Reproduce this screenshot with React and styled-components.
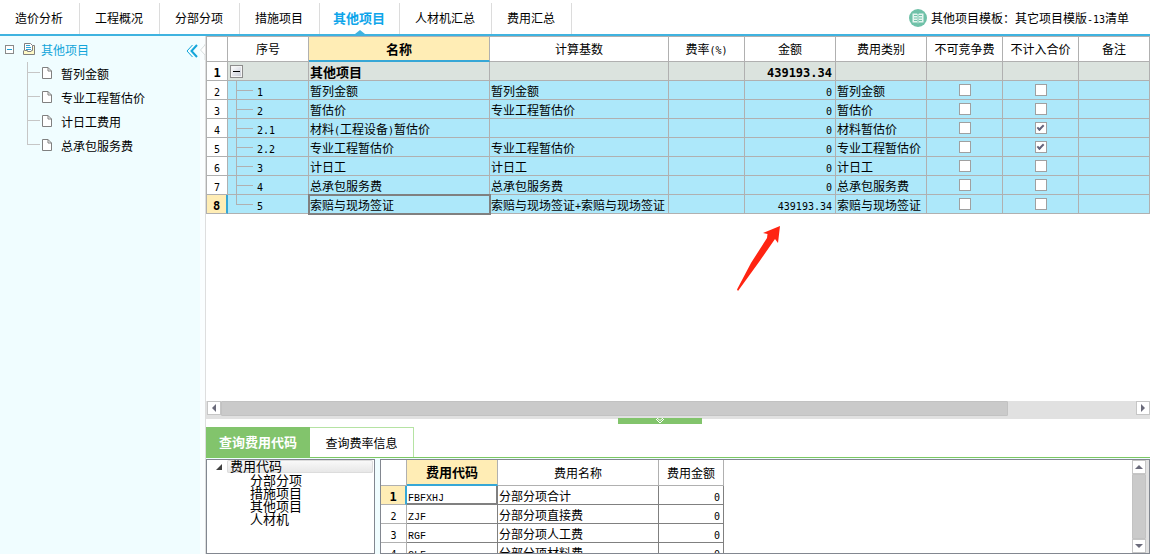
import React, { useState } from "react";
import styled, { createGlobalStyle } from "styled-components";

const GlobalStyle = createGlobalStyle`
  * {
    box-sizing: border-box;
  }
  body {
    margin: 0;
    overflow: hidden;
    color: #000;
    background: #fff;
    font-family: "Noto Sans CJK SC", sans-serif;
    font-size: 12px;
    line-height: 16px;
  }
  button {
    margin: 0;
    padding: 0;
    border: 0;
    background: none;
    color: inherit;
    font: inherit;
    cursor: pointer;
  }
  ul {
    margin: 0;
    padding: 0;
    list-style: none;
  }
`;

const Page = styled.div`
  display: flex;
  flex-direction: column;
  height: 100vh;
`;

/* top navigation */
const TopBar = styled.header`
  display: flex;
  align-items: flex-end;
  justify-content: space-between;
  height: 36px;
  padding-top: 3px;
  border-bottom: 2px solid #3fb3e0;
`;
const TopTabs = styled.nav`
  display: flex;
  height: 100%;
`;
const TopTab = styled.button`
  position: relative;
  padding: 0 16px 2px 15px;
  border-right: 1px solid #dcdcdc;
  white-space: nowrap;
  color: ${(props) => (props.$active ? "#0ea5ea" : "#000")};
  font-size: ${(props) => (props.$active ? "13px" : "12px")};
  font-weight: ${(props) => (props.$active ? "bold" : "normal")};
  span {
    margin: 0 ${(props) => (props.$active ? "-2px" : "0")};
  }
`;
const TabPointer = styled.i`
  position: absolute;
  left: 50%;
  bottom: 0;
  margin-left: -5px;
  border: 5px solid transparent;
  border-top: 0;
  border-bottom: 4px solid #3fb3e0;
`;
const TemplateButton = styled.button`
  display: flex;
  align-items: center;
  gap: 4px;
  height: 30px;
  margin-right: 21px;
  align-self: flex-start;
  white-space: nowrap;
`;

/* left tree */
const Body = styled.div`
  display: flex;
  flex: 1;
  min-height: 0;
`;
const Sidebar = styled.aside`
  width: 200px;
  flex-shrink: 0;
  background: #f0fdff;
`;
const SideHead = styled.div`
  display: flex;
  align-items: center;
  height: 26px;
  padding: 0 2px 0 5px;
  color: #12a5da;
`;
const SideTitle = styled.span`
  flex: 1;
  padding: 2px 0 0 6px;
`;
const SideToggle = styled.button`
  display: flex;
  padding-top: 3px;
`;
const SideList = styled.ul`
  padding-left: 27px;
`;
const SideItem = styled.li`
  display: flex;
  align-items: center;
  height: 24px;
  background: linear-gradient(#c6c6c6, #c6c6c6) 0 0 / 1px
      ${(props) => (props.$last ? "11px" : "24px")} no-repeat,
    linear-gradient(#c6c6c6, #c6c6c6) 0 10px / 13px 1px no-repeat;
  padding-left: 15px;
  svg {
    margin-bottom: 3px;
  }
`;
const SideLink = styled.a`
  padding-left: 9px;
  color: #000;
  text-decoration: none;
`;
const Gutter = styled.div`
  display: flex;
  width: 6px;
  flex-shrink: 0;
  padding-top: 8px;
  border-right: 1px solid #dedede;
  background: #fafeff;
`;

const Main = styled.main`
  position: relative;
  display: flex;
  flex: 1;
  flex-direction: column;
  min-width: 0;
`;
const GridArea = styled.div`
  flex: 1;
  min-height: 0;
  overflow: hidden;
`;

/* tables */
const Mono = styled.span`
  font-family: "DejaVu Sans Mono", monospace;
  font-size: ${(props) => (props.$bold ? "12px" : "10px")};
  line-height: 10px;
`;
const Code = styled.span`
  font-family: "Liberation Mono", monospace;
  font-size: 10px;
  line-height: 10px;
`;
const Grid = styled.table`
  width: ${(props) => props.$width || "100%"};
  table-layout: fixed;
  border-collapse: separate;
  border-spacing: 0;
`;
const Th = styled.th`
  height: 26px;
  padding: 0;
  border: solid #b0b0b0;
  border-width: ${(props) => (props.$top ? "1px" : "0")} 1px 1px
    ${(props) => (props.$first ? "1px" : "0")};
  font-size: ${(props) => (props.$current ? "13px" : "12px")};
  font-weight: ${(props) => (props.$current ? "bold" : "normal")};
  background: ${(props) => (props.$current ? "#ffedb5" : "#fff")};
  ${(props) => props.$current && "border-bottom: 2px solid #36a7d6;"}
`;
const RowHead = styled.th`
  height: 19px;
  padding: 1px 0 0;
  border: solid #b0b0b0;
  border-width: 0 1px 1px ${(props) => (props.$first ? "1px" : "0")};
  line-height: 16px;
  font-weight: ${(props) => (props.$bold ? "bold" : "normal")};
  background: ${(props) => (props.$current ? "#ffedb5" : "#fff")};
  ${(props) => props.$current && "border-right: 2px solid #36a7d6;"}
`;
const Td = styled.td`
  height: 19px;
  padding: 1px 3px 0 1px;
  border: solid ${(props) => props.$line || "#b0b0b0"};
  border-width: 0 1px 1px 0;
  line-height: 16px;
  white-space: nowrap;
  text-align: ${(props) => props.$align || "left"};
  background: ${(props) => props.$bg || "#ade8fa"};
  font-size: ${(props) => (props.$bold ? "13px" : "12px")};
  font-weight: ${(props) => (props.$bold ? "bold" : "normal")};
  ${(props) =>
    props.$selected && "outline: 2px solid #808080; outline-offset: -1px;"}
  ${(props) =>
    props.$focused && "box-shadow: inset -1px -1px 0 #808080;"}
`;
const TreeTd = styled(Td)`
  padding-left: 29px;
  background: linear-gradient(#b0b0b0, #b0b0b0) 8px 0 / 1px
      ${(props) => (props.$last ? "10px" : "19px")} no-repeat,
    linear-gradient(#b0b0b0, #b0b0b0) 8px 9px / 17px 1px no-repeat, #ade8fa;
`;
const ExpandTd = styled(Td)`
  padding: 0 2px;
`;
const CheckTd = styled(Td)`
  padding: 0;
`;
const Expander = styled.button`
  display: block;
  width: 13px;
  height: 13px;
  border: 1px solid #8c8c8c;
  outline: 1px solid #f4f4f4;
  outline-offset: -2px;
  background: linear-gradient(#000, #000) 50% 50% / 7px 1px no-repeat,
    linear-gradient(135deg, #fff, #c4c8d4);
`;
const Check = styled.input`
  display: block;
  appearance: none;
  width: 12px;
  height: 12px;
  margin: 0 auto;
  border: 1px solid #a0a0a0;
  background: #fff;
  &:checked::after {
    content: "";
    display: block;
    width: 5px;
    height: 2px;
    margin: 2px 0 0 1px;
    border: solid #63637b;
    border-width: 0 0 2px 2px;
    transform: rotate(-45deg);
  }
`;

/* scroll bars */
const HScroll = styled.div`
  display: flex;
  height: 18px;
  padding: 0 0 3px 1px;
  background: #e1e1e1;
`;
const VScroll = styled.div`
  display: flex;
  flex-direction: column;
  width: 17px;
  padding-right: 3px;
  background: #e1e1e1;
`;
const ScrollButton = styled.button`
  display: flex;
  flex-shrink: 0;
  align-items: center;
  justify-content: center;
  width: 14px;
  height: 14px;
  border: 1px solid #c6c6c6;
  background: #fff;
`;
const Track = styled.div`
  display: flex;
  flex: 1;
`;
const Thumb = styled.div`
  flex: 0 0 ${(props) => props.$size};
  border: 1px solid #c2c2c2;
  border-radius: 1px;
  background: #cacaca;
`;

/* bottom panel */
const Splitter = styled.div`
  height: 8px;
`;
const SplitHandle = styled.button`
  display: flex;
  align-items: center;
  justify-content: center;
  width: 84px;
  height: 6px;
  margin: -1px 0 0 412px;
  background: #82c46c;
`;
const QueryTabs = styled.div`
  display: flex;
  height: 31px;
  border-bottom: 1px solid #7cc862;
`;
const QueryTab = styled.button`
  width: 104px;
  border: solid #b5e3a3;
  border-width: ${(props) => (props.$active ? "0" : "1px 1px 0 0")};
  font-size: ${(props) => (props.$active ? "13px" : "12px")};
  font-weight: ${(props) => (props.$active ? "bold" : "normal")};
  color: ${(props) => (props.$active ? "#fff" : "#000")};
  background: ${(props) => (props.$active ? "#82c46c" : "#fff")};
`;
const Detail = styled.section`
  display: flex;
  gap: 5px;
  height: 96px;
  padding-top: 1px;
  background: #f0fdff;
`;
const CodeTree = styled.ul`
  width: 169px;
  flex-shrink: 0;
  border: 1px solid #828790;
  background: #fff;
  font-size: 13px;
  line-height: 13px;
`;
const CodeRoot = styled.div`
  display: flex;
  align-items: center;
  gap: 5px;
  padding-left: 9px;
  span {
    flex: 1;
    height: 13px;
    margin-right: 1px;
    padding-left: 3px;
    border-radius: 2px;
    box-shadow: inset 0 0 0 1px #dcdcdc;
    background: linear-gradient(#fafafa, #e6e6e6);
    line-height: 12px;
  }
`;
const CodeItem = styled.li`
  padding-left: 43px;
`;
const CodeGrid = styled.div`
  display: flex;
  flex: 1;
  min-width: 0;
  overflow: hidden;
  border: 1px solid #828790;
  background: #fff;
`;
const CodeScroll = styled.div`
  flex: 1;
  overflow: hidden;
`;

const ArrowMark = styled.svg`
  position: absolute;
  top: 189px;
  left: 530px;
  pointer-events: none;
`;

const TABS = ["造价分析", "工程概况", "分部分项", "措施项目", "其他项目", "人材机汇总", "费用汇总"];
const SIDE_ITEMS = ["暂列金额", "专业工程暂估价", "计日工费用", "总承包服务费"];
const CODE_ITEMS = ["分部分项", "措施项目", "其他项目", "人材机"];
const GREY = "#dbe3de";

const ROWS = [
  { no: "1", name: "暂列金额", base: "暂列金额", amount: "0", type: "暂列金额" },
  { no: "2", name: "暂估价", base: "专业工程暂估价", amount: "0", type: "暂估价" },
  {
    no: "2.1",
    name: (
      <>
        材料<Mono>(</Mono>工程设备<Mono>)</Mono>暂估价
      </>
    ),
    amount: "0",
    type: "材料暂估价",
    excluded: true,
  },
  { no: "2.2", name: "专业工程暂估价", base: "专业工程暂估价", amount: "0", type: "专业工程暂估价", excluded: true },
  { no: "3", name: "计日工", base: "计日工", amount: "0", type: "计日工" },
  { no: "4", name: "总承包服务费", base: "总承包服务费", amount: "0", type: "总承包服务费" },
  {
    no: "5",
    name: "索赔与现场签证",
    base: (
      <>
        索赔与现场签证<Mono>+</Mono>索赔与现场签证
      </>
    ),
    amount: "439193.34",
    type: "索赔与现场签证",
  },
];

const CODES = [
  { code: "FBFXHJ", name: "分部分项合计" },
  { code: "ZJF", name: "分部分项直接费" },
  { code: "RGF", name: "分部分项人工费" },
  { code: "CLF", name: "分部分项材料费" },
];

function BookIcon() {
  return (
    <svg width="18" height="18" viewBox="0 0 18 18">
      <circle cx="9" cy="9" r="9" fill="#6fc1a8" />
      <path d="M3.5 4.5H8L9 5.5L10 4.5H14.5V13.5H10L9 14.5L8 13.5H3.5Z" fill="#e4f5ef" />
      <path d="M9 5.5V14M5 6.5H8M5 9H8M5 11.5H8M10 6.5H13M10 9H13M10 11.5H13" stroke="#6fc1a8" fill="none" />
    </svg>
  );
}

function ProjectIcon() {
  return (
    <svg width="12" height="12" viewBox="0 0 12 12">
      <path d="M0.5 7.500V11.5H11.5V2.500H9.500" fill="#fffbd0" stroke="#808080" />
      <path d="M1.5 7.5V0.5H7.5L9.5 2.5V7.5H8.500V8.500H4.500V7.500Z" fill="#fff" stroke="#808080" />
      <path d="M3 2.5H7M3 4.5H8M3 6.5H8" stroke="#2ea5d6" fill="none" />
      <path d="M1 8H4V9.500H8.500V8H11V11H1Z" fill="#fff9c4" />
    </svg>
  );
}

function FileIcon() {
  return (
    <svg width="10" height="12" viewBox="0 0 10 12">
      <path d="M0.5 0.5H6L9.5 4V11.5H0.5Z" fill="#fff" stroke="#808080" />
      <path d="M6 0.5V4H9.5" fill="none" stroke="#808080" />
    </svg>
  );
}

function MinusBox() {
  return (
    <svg width="9" height="9" viewBox="0 0 9 9">
      <rect x="0.5" y="0.5" width="8" height="8" fill="#fff" stroke="#8a8a8a" />
      <path d="M2 4.5H7" stroke="#1aa0d8" />
    </svg>
  );
}

function Triangle({ dir }) {
  const shapes = {
    left: "M6 0V8L2 4Z",
    right: "M2 0V8L6 4Z",
    up: "M0 6H8L4 2Z",
    down: "M0 2H8L4 6Z",
  };
  return (
    <svg width="8" height="8" viewBox="0 0 8 8">
      <path d={shapes[dir]} fill="#6b6b7b" />
    </svg>
  );
}

function CostTable() {
  return (
    <Grid>
      <colgroup>
        <col style={{ width: 22 }} />
        <col style={{ width: 81 }} />
        <col style={{ width: 181 }} />
        <col style={{ width: 179 }} />
        <col style={{ width: 76 }} />
        <col style={{ width: 91 }} />
        <col style={{ width: 91 }} />
        <col style={{ width: 76 }} />
        <col style={{ width: 76 }} />
        <col />
      </colgroup>
      <thead>
        <tr>
          <Th $top $first />
          <Th $top>序号</Th>
          <Th $top $current>名称</Th>
          <Th $top>计算基数</Th>
          <Th $top>
            费率<Mono>(%)</Mono>
          </Th>
          <Th $top>金额</Th>
          <Th $top>费用类别</Th>
          <Th $top>不可竞争费</Th>
          <Th $top>不计入合价</Th>
          <Th $top>备注</Th>
        </tr>
      </thead>
      <tbody>
        <tr>
          <RowHead $first $bold>
            <Mono $bold>1</Mono>
          </RowHead>
          <ExpandTd $bg={GREY}>
            <Expander aria-label="折叠" />
          </ExpandTd>
          <Td $bg={GREY} $bold>其他项目</Td>
          <Td $bg={GREY} />
          <Td $bg={GREY} />
          <Td $bg={GREY} $bold $align="right">
            <Mono $bold>439193.34</Mono>
          </Td>
          <Td $bg={GREY} />
          <Td $bg={GREY} />
          <Td $bg={GREY} />
          <Td $bg={GREY} />
        </tr>
        {ROWS.map((row, i) => {
          const last = i === ROWS.length - 1;
          return (
            <tr key={row.no}>
              <RowHead $first $current={last} $bold={last}>
                <Mono $bold={last}>{i + 2}</Mono>
              </RowHead>
              <TreeTd $last={last}>
                <Mono>{row.no}</Mono>
              </TreeTd>
              <Td $selected={last}>{row.name}</Td>
              <Td>{row.base}</Td>
              <Td />
              <Td $align="right">
                <Mono>{row.amount}</Mono>
              </Td>
              <Td>{row.type}</Td>
              <CheckTd>
                <Check type="checkbox" aria-label="不可竞争费" />
              </CheckTd>
              <CheckTd>
                <Check type="checkbox" aria-label="不计入合价" defaultChecked={row.excluded} />
              </CheckTd>
              <Td />
            </tr>
          );
        })}
      </tbody>
    </Grid>
  );
}

function CodeTable() {
  return (
    <Grid $width="343px">
      <colgroup>
        <col style={{ width: 26 }} />
        <col style={{ width: 91 }} />
        <col style={{ width: 161 }} />
        <col style={{ width: 65 }} />
      </colgroup>
      <thead>
        <tr>
          <Th />
          <Th $current>费用代码</Th>
          <Th>费用名称</Th>
          <Th>费用金额</Th>
        </tr>
      </thead>
      <tbody>
        {CODES.map((row, i) => (
          <tr key={row.code}>
            <RowHead $current={i === 0} $bold={i === 0}>
              <Mono $bold={i === 0}>{i + 1}</Mono>
            </RowHead>
            <Td $bg="#fff" $line="#808080" $focused={i === 0}>
              <Code>{row.code}</Code>
            </Td>
            <Td $bg="#fff" $line="#808080">{row.name}</Td>
            <Td $bg="#fff" $line="#808080" $align="right">
              <Mono>0</Mono>
            </Td>
          </tr>
        ))}
      </tbody>
    </Grid>
  );
}

function App() {
  const [tab, setTab] = useState("其他项目");
  const [query, setQuery] = useState("查询费用代码");

  return (
    <Page>
      <GlobalStyle />
      <TopBar>
        <TopTabs>
          {TABS.map((name) => (
            <TopTab key={name} $active={name === tab} onClick={() => setTab(name)}>
              <span>{name}</span>
              {name === tab && <TabPointer />}
            </TopTab>
          ))}
        </TopTabs>
        <TemplateButton>
          <BookIcon />
          <span>
            其他项目模板：其它项目模版<Mono>-13</Mono>清单
          </span>
        </TemplateButton>
      </TopBar>
      <Body>
        <Sidebar>
          <SideHead>
            <MinusBox />
            <svg width="9" height="1" />
            <ProjectIcon />
            <SideTitle>其他项目</SideTitle>
            <SideToggle aria-label="收起">
              <svg width="12" height="14" viewBox="0 0 12 14" fill="none" stroke="#12a5da">
                <path d="M6.5 1L1 7L6.5 13" />
                <path d="M11 1L5.5 7L11 13" strokeWidth="2" />
              </svg>
            </SideToggle>
          </SideHead>
          <SideList>
            {SIDE_ITEMS.map((name, i) => (
              <SideItem key={name} $last={i === SIDE_ITEMS.length - 1}>
                <FileIcon />
                <SideLink href="#">{name}</SideLink>
              </SideItem>
            ))}
          </SideList>
        </Sidebar>
        <Gutter>
          <svg width="5" height="16" viewBox="0 0 5 16">
            <path d="M5 0V1L0.500 6L5 11V16" fill="#fff" stroke="#d8dede" />
          </svg>
        </Gutter>
        <Main>
          <GridArea>
            <CostTable />
          </GridArea>
          <HScroll>
            <ScrollButton aria-label="向左">
              <Triangle dir="left" />
            </ScrollButton>
            <Track>
              <Thumb $size="86%" />
            </Track>
            <ScrollButton aria-label="向右">
              <Triangle dir="right" />
            </ScrollButton>
          </HScroll>
          <Splitter>
            <SplitHandle aria-label="展开">
              <svg width="10" height="6" viewBox="0 0 10 6" fill="none" stroke="#fff">
                <path d="M2 0L5 2.5L8 0M1 1L5 5L9 1" />
              </svg>
            </SplitHandle>
          </Splitter>
          <QueryTabs>
            {["查询费用代码", "查询费率信息"].map((name) => (
              <QueryTab key={name} $active={name === query} onClick={() => setQuery(name)}>
                {name}
              </QueryTab>
            ))}
          </QueryTabs>
          <Detail>
            <CodeTree>
              <li>
                <CodeRoot>
                  <svg width="6" height="6" viewBox="0 0 6 6">
                    <path d="M6 0V6H0Z" fill="#404040" />
                  </svg>
                  <span>费用代码</span>
                </CodeRoot>
                <ul>
                  {CODE_ITEMS.map((name) => (
                    <CodeItem key={name}>{name}</CodeItem>
                  ))}
                </ul>
              </li>
            </CodeTree>
            <CodeGrid>
              <CodeScroll>
                <CodeTable />
              </CodeScroll>
              <VScroll>
                <ScrollButton aria-label="向上">
                  <Triangle dir="up" />
                </ScrollButton>
                <Thumb $size="65px" />
                <ScrollButton aria-label="向下">
                  <Triangle dir="down" />
                </ScrollButton>
              </VScroll>
            </CodeGrid>
          </Detail>
          <ArrowMark width="46" height="68" viewBox="0 0 46 68">
            <path d="M44 1L27 8L31.500 9L31 13L15 38L1 64.500L2 66L23 37L39 14L42 18Z" fill="#ff2412" />
          </ArrowMark>
        </Main>
      </Body>
    </Page>
  );
}

export default App;
